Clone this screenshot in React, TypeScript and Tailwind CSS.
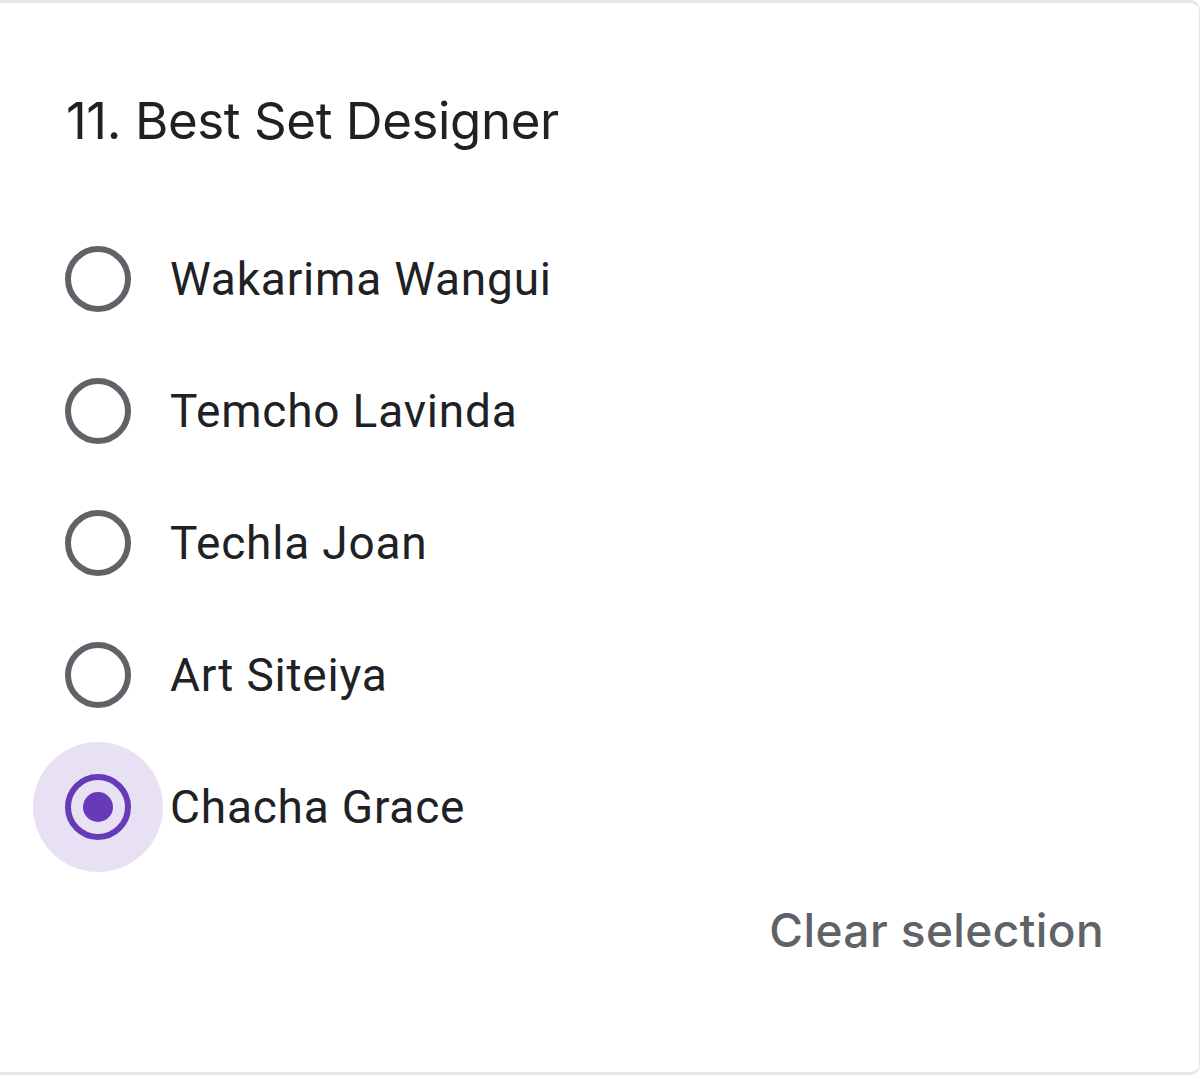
import React, { useState } from 'react';

const OPTIONS = ['Wakarima Wangui', 'Temcho Lavinda', 'Techla Joan', 'Art Siteiya', 'Chacha Grace'];

const Radio: React.FC<{ checked: boolean }> = ({ checked }) => (
  <div
    className={`w-[130px] h-[130px] rounded-full flex items-center justify-center shrink-0 ${
      checked ? 'bg-[#e8e1f4]' : ''
    }`}
  >
    <div
      className={`w-[66px] h-[66px] rounded-full border-[6px] flex items-center justify-center ${
        checked ? 'border-[#673ab7]' : 'border-[#5f6368]'
      }`}
    >
      {checked && <div className="w-[30px] h-[30px] rounded-full bg-[#673ab7]" />}
    </div>
  </div>
);

const App: React.FC = () => {
  const [selected, setSelected] = useState<number | null>(4);

  return (
    <div className="w-[1200px] h-[1075px] bg-white">
      <div className="h-full bg-white border-t-[3px] border-b-[3px] border-r border-[#e6e6e9] rounded-tr-[10px] rounded-br-[10px] pl-[33px] pr-[95px] pt-[90px]">
        <h2
          className="ml-[33px] text-[51px] leading-[56px] text-[#202124] tracking-[-0.4px]"
          style={{ fontFamily: 'Inter, "Noto Sans", sans-serif' }}
        >
          11. Best Set Designer
        </h2>

        <div className="mt-[64px] flex flex-col">
          {OPTIONS.map((name, i) => (
            <label
              key={name}
              className="flex items-center h-[132px] cursor-pointer"
              onClick={() => setSelected(i)}
            >
              <Radio checked={selected === i} />
              <span
                className="ml-[7px] text-[46px] text-[#202124] tracking-[0.8px]"
                style={{ fontFamily: 'Roboto, "Noto Sans", sans-serif' }}
              >
                {name}
              </span>
            </label>
          ))}
        </div>

        <div className="flex justify-end mt-[17px]">
          <button
            onClick={() => setSelected(null)}
            className="text-[46px] font-medium text-[#5f6368] leading-[80px] tracking-[0.4px]"
            style={{ fontFamily: 'Inter, "Noto Sans", sans-serif' }}
          >
            Clear selection
          </button>
        </div>
      </div>
    </div>
  );
};

export default App;
